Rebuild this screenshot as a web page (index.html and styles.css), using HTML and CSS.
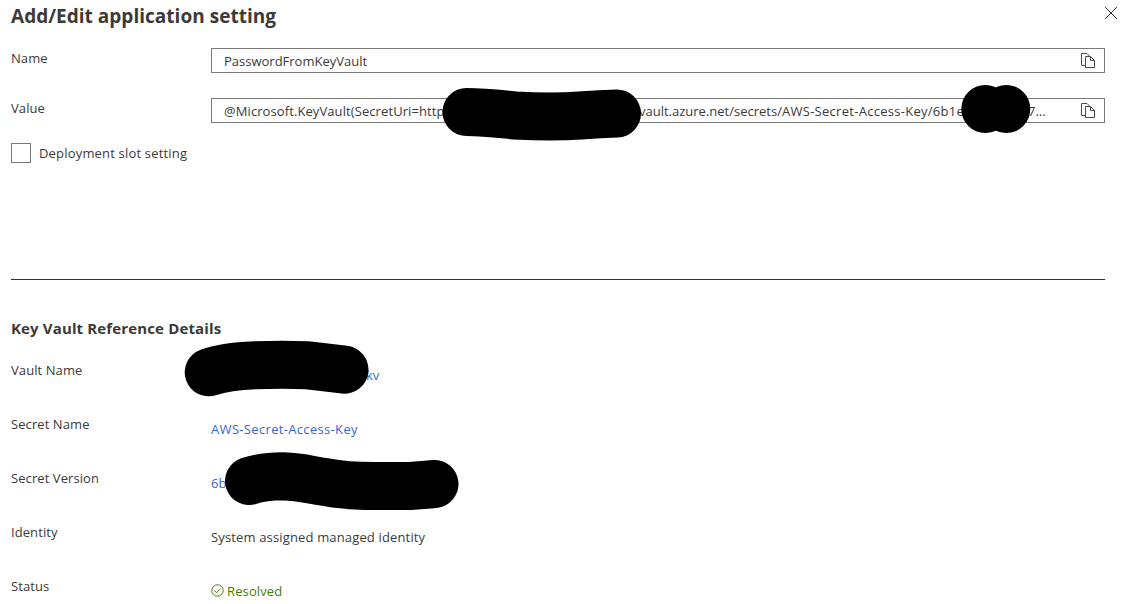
FILE: index.html
```html
<!DOCTYPE html>
<html lang="en">
<head>
<meta charset="utf-8">
<title>Add/Edit application setting</title>
<link rel="stylesheet" href="styles.css">
</head>
<body>
<main class="panel">
  <header class="header">
    <h1 class="title">Add/Edit application setting</h1>
    <svg class="close" viewBox="0 0 14 14"><path d="M1 1L13 13M13 1L1 13"/></svg>
  </header>

  <div class="field">
    <span class="label">Name</span>
    <div class="input">
      <span class="name-value">PasswordFromKeyVault</span>
      <svg class="copy" viewBox="0 0 14 16"><path class="back" d="M4.500 12.500H.5V.5H6L8.500 3"/><path d="M4.500 3.500H9.500L13.500 7.500V14.500H4.500Z"/><path class="fold" d="M9.500 3.500V7.500H13.500"/></svg>
    </div>
  </div>

  <div class="field">
    <span class="label">Value</span>
    <div class="input">
      <div class="segments"><span class="seg-start">@Microsoft.KeyVault(SecretUri=http</span><span class="seg-middle">vault.azure.net/secrets/<span class="seg-key">AWS-Secret-Access-Key/6b1e</span></span><span class="seg-end">7...</span></div>
      <svg class="copy" viewBox="0 0 14 16"><path class="back" d="M4.500 12.500H.5V.5H6L8.500 3"/><path d="M4.500 3.500H9.500L13.500 7.500V14.500H4.500Z"/><path class="fold" d="M9.500 3.500V7.500H13.500"/></svg>
    </div>
  </div>

  <label class="slot"><span class="checkbox"></span><span class="slot-text">Deployment slot setting</span></label>

  <hr class="divider">

  <section class="details">
    <h2 class="subtitle">Key Vault Reference Details</h2>
    <div class="row"><span class="label">Vault Name</span><a class="value link vault">kv</a></div>
    <div class="row"><span class="label">Secret Name</span><a class="value link secret">AWS-Secret-Access-Key</a></div>
    <div class="row"><span class="label">Secret Version</span><a class="value link">6b</a></div>
    <div class="row"><span class="label">Identity</span><span class="value identity">System assigned managed identity</span></div>
    <div class="row"><span class="label">Status</span><span class="value status"><svg class="check" viewBox="0 0 13 13"><circle cx="6.500" cy="6.500" r="5.700"/><path d="M3.500 6.700L5.600 8.700L9.600 4.600"/></svg>Resolved</span></div>
  </section>

  <svg class="redactions" viewBox="0 0 1124 604">
    <path d="M466.500 112C485 112 500 114 515 115.500Q552 117.500 580 115.500Q600 114 617 113.500"/>
    <path d="M985.300 109h.01M1006.300 109h.01"/>
    <path d="M208.700 372.300Q225 366.500 255 365.200Q283 364.500 306 365.200L344.500 369.700"/>
    <path d="M249 481Q262 476.500 283 476.300C303 477 310 480 325 482Q345 486 375 486H410Q424 485 434.500 484"/>
  </svg>
</main>
</body>
</html>
```
FILE: styles.css
```css
* { box-sizing: border-box; }
body {
  margin: 0;
  background: #fff;
  color: #3b3a39;
  font-family: "Open Sans", "Noto Sans", sans-serif;
  font-size: 13px;
  line-height: 20px;
  overflow: hidden;
}
.panel {
  position: relative;
  width: 1124px;
  height: 604px;
  padding: 4px 19px 0 11px;
  overflow: hidden;
}
.header { display: flex; justify-content: space-between; height: 44px; }
.title { margin: 0; font-size: 19px; font-weight: 700; line-height: 24px; letter-spacing: .02px; white-space: nowrap; }
.close { width: 14px; height: 14px; margin: 2px -13px 0 0; fill: none; stroke: #323130; stroke-width: 1; flex: none; }
.label { letter-spacing: .08px; }
.field { display: grid; grid-template-columns: 200px 1fr; height: 50px; }
.input {
  display: flex;
  align-items: center;
  justify-content: space-between;
  height: 25px;
  padding: 0 9px 0 12px;
  border: 1px solid #7b7a79;
  white-space: nowrap;
}
.copy { width: 14px; height: 16px; fill: #fff; stroke: #4a4948; stroke-width: 1; }
.copy .back, .copy .fold { fill: none; }
.segments { display: flex; }
.seg-start { width: 415px; letter-spacing: .09px; }
.seg-middle { width: 389px; }
.seg-key { letter-spacing: .28px; }
.slot { display: flex; align-items: center; gap: 8px; width: max-content; height: 20px; margin-top: -5px; }
.slot-text { letter-spacing: .18px; }
.checkbox { width: 20px; height: 20px; border: 1px solid #7b7a79; }
.divider { height: 1px; margin: 116px 0 38px; border: 0; background: #323130; }
.subtitle { margin: 0; font-size: 15px; font-weight: 700; line-height: 20px; letter-spacing: .14px; white-space: nowrap; }
.details { display: flex; flex-direction: column; }
.row { display: grid; grid-template-columns: 200px 1fr; height: 54px; }
.subtitle + .row { margin-top: 22px; }
.value { padding-top: 5px; }
.link { color: #3367d6; }
.vault { padding-left: 155px; }
.secret { letter-spacing: .33px; }
.identity { letter-spacing: .15px; }
.status { display: flex; align-items: flex-start; gap: 3px; color: #428000; letter-spacing: .12px; }
.check { width: 13px; height: 13px; margin-top: 3px; fill: none; stroke: currentColor; stroke-width: 1; }
.redactions {
  position: absolute;
  inset: 0;
  width: 1124px;
  height: 604px;
  fill: none;
  stroke: #000;
  stroke-width: 48;
  stroke-linecap: round;
  stroke-linejoin: round;
  pointer-events: none;
}
```
